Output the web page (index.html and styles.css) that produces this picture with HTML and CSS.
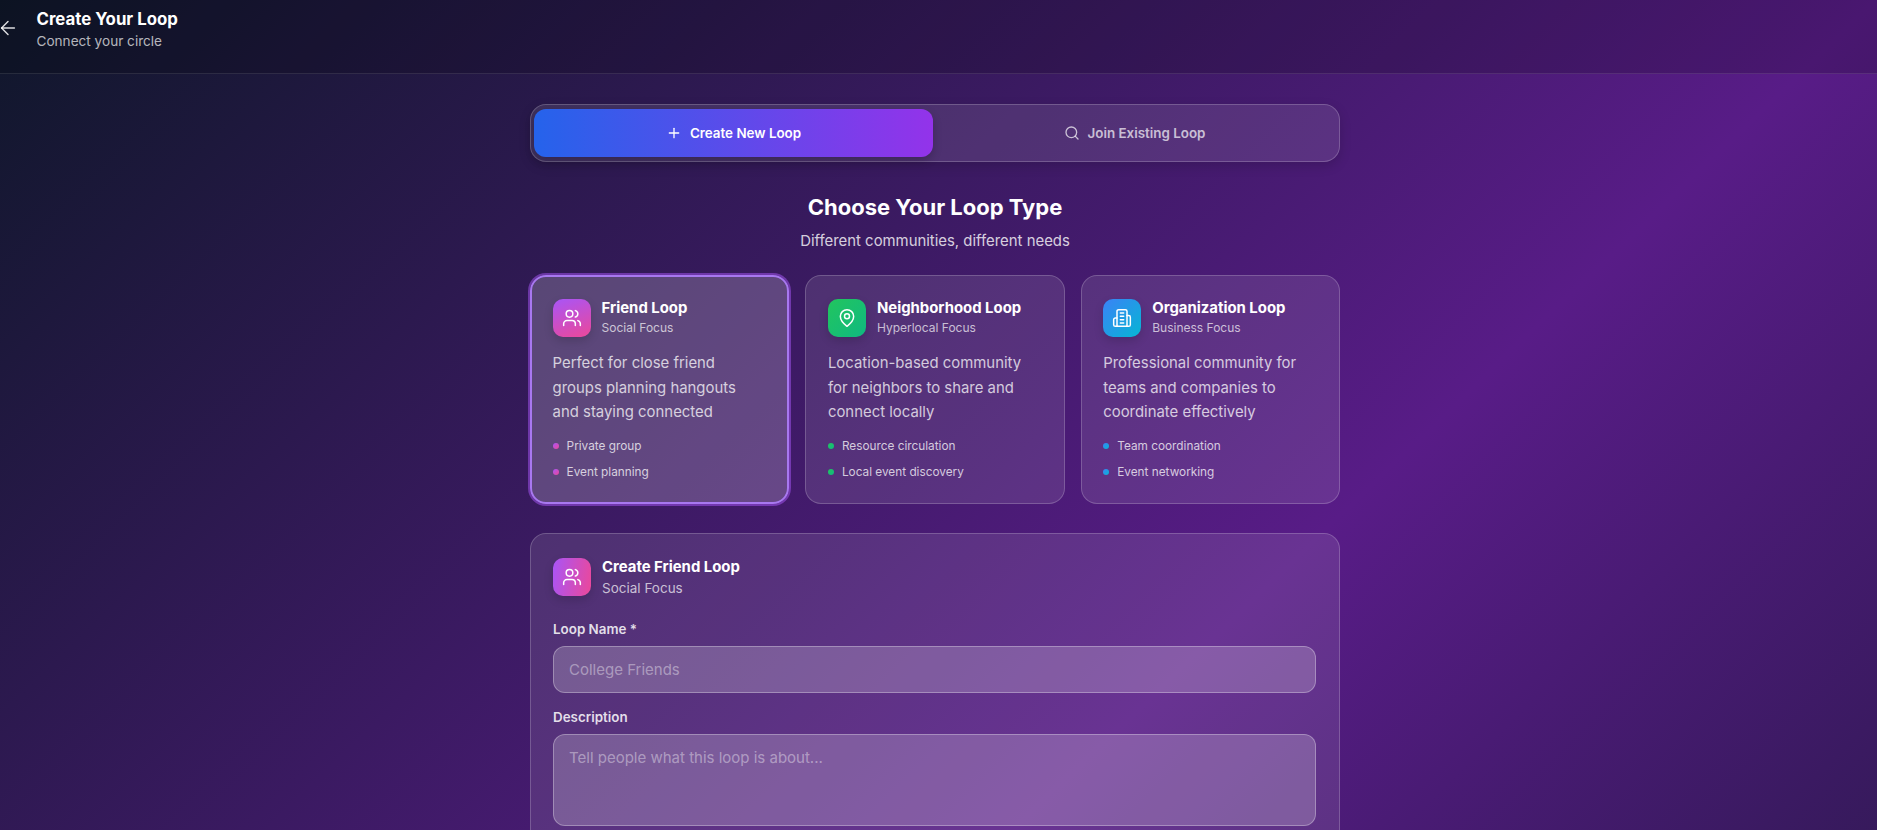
FILE: index.html
```html
<!DOCTYPE html>
<html lang="en">
<head>
  <meta charset="UTF-8" />
  <title>Create Your Loop</title>
  <link rel="stylesheet" href="styles.css">
</head>
<body>
  <header class="top-bar">
    <button type="button" class="back-button" aria-label="Back">
      <svg class="icon-back" viewBox="0 0 24 24"><path d="m12 19-7-7 7-7"/><path d="M19 12H5"/></svg>
    </button>
    <div class="top-text">
      <h1>Create Your Loop</h1>
      <p>Connect your circle</p>
    </div>
  </header>

  <main class="content">
    <div class="tabs">
      <button type="button" class="tab tab-active">
        <svg class="icon-tab" viewBox="0 0 24 24"><path d="M5 12h14"/><path d="M12 5v14"/></svg>
        Create New Loop
      </button>
      <button type="button" class="tab">
        <svg class="icon-tab" viewBox="0 0 24 24"><circle cx="11" cy="11" r="8"/><path d="m21 21-4.3-4.3"/></svg>
        Join Existing Loop
      </button>
    </div>

    <section class="intro">
      <h2>Choose Your Loop Type</h2>
      <p>Different communities, different needs</p>
    </section>

    <div class="type-grid">
      <!-- friend -->
      <article class="type-card type-card-selected">
        <div class="type-head">
          <div class="badge badge-friend">
            <svg viewBox="0 0 24 24"><path d="M16 21v-2a4 4 0 0 0-4-4H6a4 4 0 0 0-4 4v2"/><circle cx="9" cy="7" r="4"/><path d="M22 21v-2a4 4 0 0 0-3-3.87"/><path d="M16 3.13a4 4 0 0 1 0 7.75"/></svg>
          </div>
          <div>
            <h3>Friend Loop</h3>
            <span class="type-focus">Social Focus</span>
          </div>
        </div>
        <p class="type-text">Perfect for close friend groups planning hangouts and staying connected</p>
        <ul class="type-list">
          <li><i class="dot dot-friend"></i>Private group</li>
          <li><i class="dot dot-friend"></i>Event planning</li>
        </ul>
      </article>

      <!-- neighborhood -->
      <article class="type-card">
        <div class="type-head">
          <div class="badge badge-hood">
            <svg viewBox="0 0 24 24"><path d="M20 10c0 6-8 12-8 12s-8-6-8-12a8 8 0 0 1 16 0Z"/><circle cx="12" cy="10" r="3"/></svg>
          </div>
          <div>
            <h3>Neighborhood Loop</h3>
            <span class="type-focus">Hyperlocal Focus</span>
          </div>
        </div>
        <p class="type-text">Location-based community for neighbors to share and connect locally</p>
        <ul class="type-list">
          <li><i class="dot dot-hood"></i>Resource circulation</li>
          <li><i class="dot dot-hood"></i>Local event discovery</li>
        </ul>
      </article>

      <!-- organization -->
      <article class="type-card">
        <div class="type-head">
          <div class="badge badge-org">
            <svg viewBox="0 0 24 24"><path d="M6 22V4a2 2 0 0 1 2-2h8a2 2 0 0 1 2 2v18Z"/><path d="M6 12H4a2 2 0 0 0-2 2v6a2 2 0 0 0 2 2h2"/><path d="M18 9h2a2 2 0 0 1 2 2v9a2 2 0 0 1-2 2h-2"/><path d="M10 6h4"/><path d="M10 10h4"/><path d="M10 14h4"/><path d="M10 18h4"/></svg>
          </div>
          <div>
            <h3>Organization Loop</h3>
            <span class="type-focus">Business Focus</span>
          </div>
        </div>
        <p class="type-text">Professional community for teams and companies to coordinate effectively</p>
        <ul class="type-list">
          <li><i class="dot dot-org"></i>Team coordination</li>
          <li><i class="dot dot-org"></i>Event networking</li>
        </ul>
      </article>
    </div>

    <form class="form-card">
      <div class="form-head">
        <div class="badge badge-friend-flat">
          <svg viewBox="0 0 24 24"><path d="M16 21v-2a4 4 0 0 0-4-4H6a4 4 0 0 0-4 4v2"/><circle cx="9" cy="7" r="4"/><path d="M22 21v-2a4 4 0 0 0-3-3.87"/><path d="M16 3.13a4 4 0 0 1 0 7.75"/></svg>
        </div>
        <div>
          <h3>Create Friend Loop</h3>
          <span class="form-focus">Social Focus</span>
        </div>
      </div>

      <label class="field-label" for="loopName">Loop Name *</label>
      <input class="field" id="loopName" type="text" placeholder="College Friends">

      <label class="field-label" for="loopDesc">Description</label>
      <textarea class="field field-area" id="loopDesc" placeholder="Tell people what this loop is about..."></textarea>
    </form>
  </main>
</body>
</html>
```

FILE: styles.css
```css
* {
  box-sizing: border-box;
}
html, body {
  height: 830px;
  overflow: hidden;
}
body {
  margin: 0;
  font-family: Inter, "Liberation Sans", sans-serif;
  color: #fff;
  background: linear-gradient(to bottom right, #0f172a, #581c87, #0f172a) no-repeat;
  background-size: 100% 1803px;
}
h1, h2, h3, p, ul {
  margin: 0;
  padding: 0;
}
button {
  font-family: inherit;
  border: 0;
  background: none;
  cursor: pointer;
}
svg {
  fill: none;
  stroke: currentColor;
  stroke-width: 2;
  stroke-linecap: round;
  stroke-linejoin: round;
}

/* top bar */
.top-bar {
  height: 74px;
  display: flex;
  align-items: flex-start;
  gap: 17.5px;
  background: rgba(0, 0, 0, 0.17);
  border-bottom: 1px solid rgba(255, 255, 255, 0.1);
}
.back-button {
  padding: 0;
  margin: 17px 0 0 -3px;
  color: rgba(255, 255, 255, 0.85);
  display: flex;
}
.icon-back {
  width: 22px;
  height: 22px;
  stroke-width: 1.6;
}
.top-text {
  padding-top: 7px;
}
.top-text h1 {
  font-size: 16.8px;
  line-height: 24px;
  font-weight: 700;
}
.top-text p {
  font-size: 13.6px;
  line-height: 20px;
  color: rgba(255, 255, 255, 0.7);
}

.content {
  width: 817px;
  margin: 0 auto;
  padding: 30px 7px 0 0;
}

/* tabs */
.tabs {
  display: flex;
  padding: 4px 3px 4px 3px;
  height: 58px;
  background: rgba(255, 255, 255, 0.1);
  border: 1px solid rgba(255, 255, 255, 0.2);
  border-radius: 16px;
  box-shadow: 0 4px 12px rgba(0, 0, 0, 0.15);
}
.tab {
  flex: 1;
  display: flex;
  align-items: center;
  justify-content: center;
  gap: 8px;
  font-size: 13.4px;
  font-weight: 600;
  color: rgba(255, 255, 255, 0.7);
  border-radius: 12px;
}
.tab-active {
  flex: 0 0 399px;
  color: #fff;
  background: linear-gradient(90deg, #2563eb, #9333ea);
  box-shadow: 0 4px 10px rgba(0, 0, 0, 0.2);
}
.icon-tab {
  width: 16px;
  height: 16px;
}

/* heading */
.intro {
  text-align: center;
  margin-top: 31px;
}
.intro h2 {
  font-size: 22px;
  line-height: 28px;
  font-weight: 700;
}
.intro p {
  margin-top: 9px;
  font-size: 14.9px;
  line-height: 22px;
  color: rgba(255, 255, 255, 0.8);
}

/* loop type cards */
.type-grid {
  display: grid;
  grid-template-columns: repeat(3, 1fr);
  gap: 16px;
  margin-top: 23px;
}
.type-card {
  height: 229px;
  padding: 22px 21.6px;
  background: rgba(255, 255, 255, 0.1);
  border: 1px solid rgba(255, 255, 255, 0.2);
  border-radius: 16px;
}
.type-card-selected {
  background: rgba(255, 255, 255, 0.2);
  border: 2px solid #a878f0;
  padding: 21px 21.6px 21px 20.6px;
  box-shadow: 0 0 0 2px rgba(168, 85, 247, 0.5);
}
.type-head, .form-head {
  display: flex;
  align-items: center;
  gap: 11px;
}
.type-head h3 {
  font-size: 14.9px;
  line-height: 20px;
  font-weight: 700;
}
.type-focus {
  display: block;
  margin-top: 1px;
  font-size: 12px;
  line-height: 18px;
  color: rgba(255, 255, 255, 0.7);
}
.badge {
  flex: none;
  width: 38px;
  height: 38px;
  border-radius: 10px;
  display: flex;
  align-items: center;
  justify-content: center;
  color: #fff;
  box-shadow: 0 4px 10px rgba(0, 0, 0, 0.15);
}
.badge svg {
  width: 20px;
  height: 20px;
  stroke-width: 1.8;
}
.badge-friend {
  background: linear-gradient(160deg, #a855f7, #ec4899);
}
.badge-friend-flat {
  background: linear-gradient(100deg, #a855f7, #ec4899);
}
.badge-hood {
  background: linear-gradient(135deg, #22c55e, #10b981);
}
.badge-org {
  background: linear-gradient(135deg, #3b82f6, #06b6d4);
}
.type-text {
  margin-top: 14px;
  font-size: 14.9px;
  line-height: 24.5px;
  color: rgba(255, 255, 255, 0.75);
}
.type-list {
  list-style: none;
  margin-top: 8px;
}
.type-list li {
  display: flex;
  align-items: center;
  gap: 8px;
  height: 26px;
  font-size: 11.8px;
  color: rgba(255, 255, 255, 0.75);
}
.dot {
  width: 6px;
  height: 6px;
  border-radius: 50%;
}
.dot-friend {
  background: linear-gradient(135deg, #a855f7, #ec4899);
}
.dot-hood {
  background: linear-gradient(135deg, #22c55e, #10b981);
}
.dot-org {
  background: linear-gradient(135deg, #3b82f6, #06b6d4);
}

/* create form */
.form-card {
  margin-top: 29px;
  height: 420px;
  padding: 23px 23px 23px 22px;
  background: rgba(255, 255, 255, 0.1);
  border: 1px solid rgba(255, 255, 255, 0.2);
  border-radius: 16px;
}
.form-head h3 {
  font-size: 14.9px;
  line-height: 20px;
  font-weight: 700;
}
.form-focus {
  display: block;
  margin-top: 2px;
  font-size: 13.5px;
  line-height: 18px;
  color: rgba(255, 255, 255, 0.7);
}
.field-label {
  display: block;
  margin: 23px 0 8px;
  font-size: 13.4px;
  line-height: 18px;
  font-weight: 600;
  color: rgba(255, 255, 255, 0.85);
}
.field {
  display: block;
  width: 100%;
  height: 47px;
  padding: 0 15px;
  font-family: inherit;
  font-size: 15px;
  color: #fff;
  background: rgba(255, 255, 255, 0.2);
  border: 1px solid rgba(255, 255, 255, 0.3);
  border-radius: 12px;
  outline: none;
  resize: none;
}
.field::placeholder {
  color: rgba(255, 255, 255, 0.4);
}
.field-area {
  height: 92px;
  padding-top: 13px;
}
input.field + .field-label {
  margin-top: 15px;
}
```
